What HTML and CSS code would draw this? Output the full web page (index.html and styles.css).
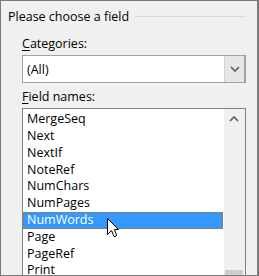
FILE: index.html
```html
<!DOCTYPE html>
<html>
<head>
<meta charset="utf-8">
<link rel="stylesheet" href="styles.css">
</head>
<body>
<div class="frame">
  <div class="title-row">
    <span class="title">Please choose a field</span>
    <span class="rule"></span>
  </div>
  <div class="section">
    <div class="label"><u>C</u>ategories:</div>
    <div class="combo">
      <span class="combo-text">(All)</span>
      <span class="combo-btn">
        <svg width="10" height="6" viewBox="0 0 10 6"><path d="M1 1 L5 5 L9 1" fill="none" stroke="#5f5f5f" stroke-width="1.7"/></svg>
      </span>
    </div>
    <div class="label label-2"><u>F</u>ield names:</div>
    <div class="listbox">
      <ul class="items">
        <li>MergeSeq</li>
        <li>Next</li>
        <li>NextIf</li>
        <li>NoteRef</li>
        <li>NumChars</li>
        <li>NumPages</li>
        <li class="sel">NumWords</li>
        <li>Page</li>
        <li>PageRef</li>
        <li>Print</li>
      </ul>
      <div class="scrollbar">
        <div class="sb-up">
          <svg width="10" height="6" viewBox="0 0 10 6"><path d="M1 5 L5 1 L9 5" fill="none" stroke="#5f5f5f" stroke-width="1.7"/></svg>
        </div>
        <div class="sb-thumb"></div>
      </div>
    </div>
  </div>
  <svg class="cursor" width="13" height="20" viewBox="0 0 13 20"><polygon points="0.5,0.5 0.5,16.5 4.5,12.5 7,18.5 8.5,18.5 9.5,17 7.5,11.5 11.5,11.5" fill="#fff" stroke="#000" stroke-width="1" stroke-linejoin="miter"/></svg>
</div>
</body>
</html>
```
FILE: styles.css
```css
html, body {
  margin: 0;
  padding: 0;
}
body {
  width: 259px;
  height: 276px;
  overflow: hidden;
  background: #f0f0f0;
  font-family: "Open Sans", "Noto Sans", sans-serif;
  font-size: 12.5px;
  color: #000;
}
.frame {
  box-sizing: border-box;
  width: 259px;
  height: 276px;
  border: 1px solid #7a7a7a;
  border-right-width: 2px;
  padding: 7px 11px 0 7px;
  overflow: hidden;
  position: relative;
}
.title-row {
  display: flex;
  align-items: center;
  gap: 6px;
  height: 17px;
  line-height: 17px;
}
.title {
  white-space: nowrap;
}
.rule {
  flex: 1;
  height: 1px;
  background: #dadada;
}
.section {
  margin-left: 14px;
  display: flex;
  flex-direction: column;
}
.label {
  line-height: 17px;
  margin-top: 10px;
  margin-bottom: 3px;
}
.label-2 {
  margin-top: 5px;
}
.label u {
  text-decoration-thickness: 1px;
  text-underline-offset: 2px;
}
.combo {
  box-sizing: border-box;
  height: 28px;
  border: 1px solid #a2a2a2;
  background: #fff;
  display: flex;
}
.combo-text {
  flex: 1;
  display: flex;
  align-items: center;
  padding-left: 4px;
}
.combo-btn {
  width: 19px;
  background: #e6e6e6;
  border-left: 1px solid #d2d2d2;
  border-right: 1px solid #a2a2a2;
  display: flex;
  align-items: center;
  justify-content: center;
}
.listbox {
  box-sizing: border-box;
  height: 200px;
  border: 1px solid #828282;
  background: #fff;
  display: flex;
}
.items {
  list-style: none;
  margin: 0;
  padding: 2.3px 0 0 0;
  flex: 1;
  min-width: 0;
}
.items li {
  box-sizing: border-box;
  height: 16.8px;
  line-height: 16.8px;
  padding-left: 4px;
  white-space: nowrap;
}
.items li.sel {
  color: #fff;
  margin-right: 1px;
  background:
    repeating-linear-gradient(90deg, #cc6600 0 1px, transparent 1px 2px) left top / 100% 1px no-repeat,
    repeating-linear-gradient(90deg, #cc6600 0 1px, transparent 1px 2px) left bottom / 100% 1px no-repeat,
    repeating-linear-gradient(180deg, #cc6600 0 1px, transparent 1px 2px) left top / 1px 100% no-repeat,
    repeating-linear-gradient(180deg, #cc6600 0 1px, transparent 1px 2px) right top / 1px 100% no-repeat,
    #3399ff;
}
.scrollbar {
  width: 21px;
  background: #f0f0f0;
  display: flex;
  flex-direction: column;
}
.sb-up {
  height: 21px;
  display: flex;
  align-items: center;
  justify-content: center;
  padding-right: 1px;
}
.sb-thumb {
  margin-top: 141px;
  margin-left: 1px;
  width: 18px;
  height: 40px;
  background: #cdcdcd;
}
.cursor {
  position: absolute;
  left: 106px;
  top: 217px;
}
```
